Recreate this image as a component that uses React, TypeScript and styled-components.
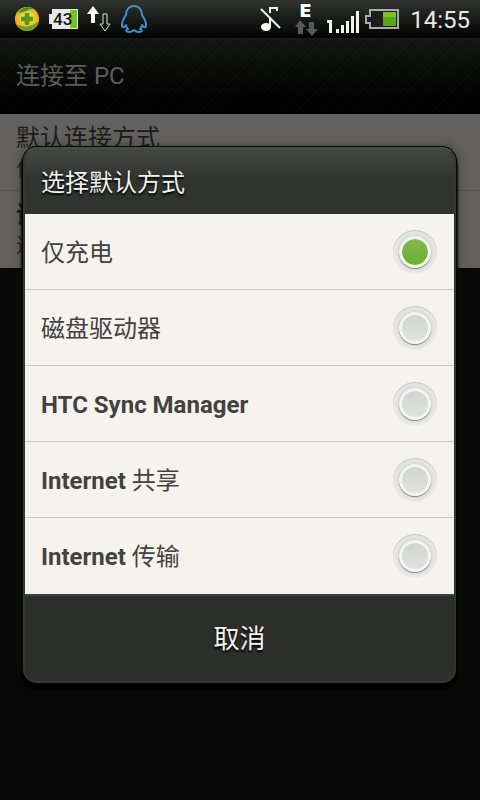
import React, { useState } from "react";
import styled, { createGlobalStyle } from "styled-components";

const GlobalStyle = createGlobalStyle`
  *, *::before { box-sizing: border-box; }
  html, body, #root { height: 100%; }
  body {
    margin: 0;
    background: #080808;
    font-family: Roboto, "Noto Sans CJK SC", sans-serif;
  }
  h1, h2, p { margin: 0; font-weight: 400; }
`;

const Screen = styled.div`
  min-height: 100%;
  display: grid;
  grid-template-rows: auto 1fr;
  background: #080808;
`;

const StatusBar = styled.header`
  height: 38px;
  padding: 0 10px 0 14px;
  display: flex;
  align-items: center;
  justify-content: space-between;
  background: linear-gradient(#30332f, #0a0b0a 85%, #000);
  border-bottom: 1px solid #000;
`;

const IconGroup = styled.div<{ $gap: number }>`
  display: flex;
  align-items: center;
  gap: ${(p) => p.$gap}px;
  svg { display: block; }
`;

const Clock = styled.time`
  margin-left: 6px;
  padding-top: 2px;
  font-size: 24px;
  line-height: 36px;
  color: #e8e8e6;
`;

const Stage = styled.div`
  display: grid;
  grid-template-columns: minmax(0, 1fr);
  > * { grid-area: 1 / 1; }
`;

const Page = styled.main`
  display: flex;
  flex-direction: column;
`;

const TitleBar = styled.div`
  height: 76px;
  padding: 0 16px;
  display: flex;
  align-items: center;
  background:
    repeating-linear-gradient(135deg, #ffffff04 0 2px, transparent 2px 4px),
    linear-gradient(#121511, #000 80%);
  border-top: 1px solid #191a18;
  border-bottom: 2px solid #000;
`;

const PageTitle = styled.h1`
  font-size: 24px;
  line-height: 32px;
  color: #5c5d5a;
`;

const Setting = styled.section`
  height: 77px;
  padding: 8px 16px;
  background: #626160;
  border-bottom: 1px solid #535251;
  color: #1c1b1a;
  &:last-child { border-bottom: 0; }
`;

const SettingName = styled.h2<{ $strong?: boolean }>`
  font-size: 24px;
  line-height: 32px;
  font-weight: ${(p) => (p.$strong ? 700 : 400)};
`;

const SettingNote = styled.p`
  font-size: 20px;
  line-height: 30px;
  color: #2c2c2b;
`;

const Overlay = styled.div`
  position: relative;
  padding: 109px 24px 0 23px;
`;

const Dialog = styled.form`
  overflow: hidden;
  border: 2px solid #343733;
  border-top-color: #4a4d49;
  border-radius: 14px;
  background: #2b2d2a;
  box-shadow: 0 0 0 1px #050605, 0 5px 2px 2px #000000e0, 0 0 10px 2px #1b200f70;
`;

const weave = "repeating-conic-gradient(#ffffff06 0 25%, transparent 0 50%) 0 0 / 2px 2px";

const DialogTitle = styled.h2`
  height: 65px;
  padding: 2px 16px 0;
  font-size: 24px;
  line-height: 64px;
  color: #f2f2ef;
  text-shadow: 0 2px 2px #000;
  background: ${weave}, linear-gradient(#41443f, #2f312e 45%, #2d2f2c);
`;

const Options = styled.div`
  background: #f6f3ef;
`;

const Option = styled.label`
  height: 76px;
  padding: 0 17px 0 16px;
  display: flex;
  align-items: center;
  justify-content: space-between;
  font-size: 24px;
  line-height: 32px;
  color: #43423e;
  border-bottom: 1px solid #c9c8c3;
  &:last-child { border-bottom-color: #f6f3ef; }
`;

const OptionText = styled.span`
  padding-top: 2px;
`;

const Radio = styled.input`
  appearance: none;
  display: grid;
  place-items: center;
  width: 44px;
  height: 44px;
  margin: 0;
  border-radius: 50%;
  background: radial-gradient(circle, #dededb 16px, #e6e6e3 20px, #eeece8 22px);
  box-shadow: inset 0 1px 1px #c2c3bf;
  &::before {
    content: "";
    width: 32px;
    height: 32px;
    border-radius: 50%;
    border: 3px solid #f4f5f3;
    background: linear-gradient(#d2d5d2, #e0e1df) padding-box;
    box-shadow: 0 1px 1px #7f817e, 0 0 1px #a4a5a2;
  }
  &:checked::before {
    background: linear-gradient(#80b94a, #6eb02f) padding-box;
  }
`;

const Cancel = styled.button`
  display: block;
  width: 100%;
  height: 87px;
  padding: 0;
  border: 0;
  border-top: 2px solid #3c423b;
  font: inherit;
  font-size: 26px;
  line-height: 36px;
  color: #f2f2ef;
  text-shadow: 0 2px 2px #000;
  background: ${weave}, #2a2c29;
`;

const choices = [
  { id: "charge", text: "仅充电" },
  { id: "disk", text: "磁盘驱动器" },
  { id: "sync", latin: "HTC Sync Manager" },
  { id: "share", latin: "Internet", text: " 共享" },
  { id: "transfer", latin: "Internet", text: " 传输" },
];

const SecurityIcon = () => (
  <svg width="26" height="26" viewBox="0 0 28 28">
    <defs>
      <radialGradient id="gold" cx="50%" cy="45%">
        <stop offset="0" stopColor="#ffe94a" />
        <stop offset="1" stopColor="#f0a91a" />
      </radialGradient>
    </defs>
    <circle cx="14" cy="14" r="13" fill="url(#gold)" />
    <path d="M3 8C8-1 20-1 24 6C17 3 11 9 3 8Z" fill="#a9c832" />
    <path d="M4 7C9 1 16 0 21 3C14 3 11 8 4 7Z" fill="#4f8d2b" />
    <path d="M3 20C9 23 19 23 26 17C23 29 8 30 3 20Z" fill="#6c9f27" />
    <path d="M11 7h6v4h4v6h-4v4h-6v-4H7v-6h4Z" fill="#5f951d" stroke="#e3dc45" strokeWidth="1" strokeLinejoin="round" />
  </svg>
);

const BatteryCount = () => (
  <svg width="31" height="22" viewBox="0 0 31 22">
    <path d="M4 1h26v20H4v-5H1V6h3Z" fill="#e6e9e8" />
    <path d="M22 2h7v18h-7Z" fill="#72c51c" />
    <text x="5" y="17" fontFamily="Roboto, sans-serif" fontSize="17" fontWeight="500" fill="#111411">43</text>
  </svg>
);

const TransferIcon = () => (
  <svg width="24" height="27" viewBox="0 0 24 27">
    <path d="m6 1 6 8H8v9H4V9H0Z" fill="#fff" />
    <path d="M16 9h4v10h3l-5 7-5-7h3Z" fill="none" stroke="#ddd" strokeWidth="1" />
  </svg>
);

const PenguinIcon = () => (
  <svg width="28" height="28" viewBox="-3 0 28 28" fill="none" stroke="#3e8fd3" strokeWidth="2" strokeLinejoin="round">
    <path d="M12 1C7 1 4 5 4 10C2 13 0 16 0 20C0 23 2 23 4 20C4 22 5 23 6 24C3 25 4 27 7 27C10 27 11 26 12 25C13 26 14 27 17 27C20 27 21 25 18 24C19 23 20 22 20 20C22 23 24 23 24 20C24 16 22 13 20 10C20 5 17 1 12 1Z" />
  </svg>
);

const SilentIcon = () => (
  <svg width="22" height="26" viewBox="0 0 22 26">
    <ellipse cx="6" cy="21" rx="5" ry="4" fill="#fff" />
    <path d="M10 21V12M10 7V2h7v3" fill="none" stroke="#f4f4f4" strokeWidth="2" />
    <path d="m1 3 19 19" fill="none" stroke="#f4f4f4" strokeWidth="2" />
  </svg>
);

const EdgeIcon = () => (
  <svg width="35" height="38" viewBox="-8 0 35 38">
    <text x="5" y="17" fontFamily="Inter, sans-serif" fontSize="18" fontWeight="900" fill="#fff">E</text>
    <path d="m5 20 6 7H8v7H3v-7H0Z" fill="#565856" />
    <path d="M14 22h5v7h4l-6 7-6-7h3Z" fill="#565856" />
  </svg>
);

const SignalIcon = () => (
  <svg width="33" height="38" viewBox="0 -10 33 38" fill="#f2f2f2">
    <path d="M0 10h5v13H2V13H0ZM9 19h3v4H9ZM14 15h3v8h-3ZM19 11h3v12h-3ZM24 6h3v17h-3ZM29 1h3v22h-3Z" />
  </svg>
);

const BatteryIcon = () => (
  <svg width="34" height="20" viewBox="0 0 34 20">
    <path d="M5 1h28v18H5v-5H1V7h4Z" fill="#1c1d1c" stroke="#aaa" strokeWidth="2" />
    <path d="M18 3h13v14H18Z" fill="#59a80f" />
    <path d="M18 3h13v5H18Z" fill="#7ac129" />
  </svg>
);

export default function App() {
  const [picked, setPicked] = useState("charge");
  return (
    <>
      <GlobalStyle />
      <Screen>
        <StatusBar>
          <IconGroup $gap={8}>
            <SecurityIcon />
            <BatteryCount />
            <TransferIcon />
            <PenguinIcon />
          </IconGroup>
          <IconGroup $gap={5}>
            <SilentIcon />
            <EdgeIcon />
            <SignalIcon />
            <BatteryIcon />
            <Clock>14:55</Clock>
          </IconGroup>
        </StatusBar>
        <Stage>
          <Page>
            <TitleBar>
              <PageTitle>连接至 PC</PageTitle>
            </TitleBar>
            <Setting>
              <SettingName>默认连接方式</SettingName>
              <SettingNote>仅充电</SettingNote>
            </Setting>
            <Setting>
              <SettingName $strong>询问我</SettingName>
              <SettingNote>连接至 PC 时询问</SettingNote>
            </Setting>
          </Page>
          <Overlay>
            <Dialog role="dialog" aria-labelledby="dialog-title">
              <DialogTitle id="dialog-title">选择默认方式</DialogTitle>
              <Options>
                {choices.map((c) => (
                  <Option key={c.id}>
                    <OptionText>
                      {c.latin && <b>{c.latin}</b>}
                      {c.text}
                    </OptionText>
                    <Radio
                      type="radio"
                      name="mode"
                      value={c.id}
                      checked={picked === c.id}
                      onChange={() => setPicked(c.id)}
                    />
                  </Option>
                ))}
              </Options>
              <Cancel type="button">取消</Cancel>
            </Dialog>
          </Overlay>
        </Stage>
      </Screen>
    </>
  );
}
